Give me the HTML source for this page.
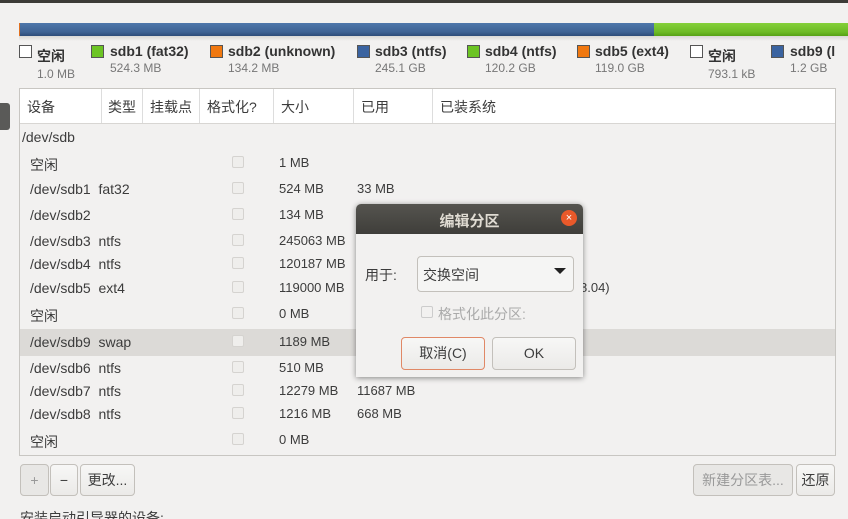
<!DOCTYPE html><html><head><meta charset="utf-8"><style>
html,body{margin:0;width:848px;height:519px;overflow:hidden}
body{background:#f2f1f0;font-family:"Liberation Sans","Noto Sans CJK SC",sans-serif;font-size:14px;color:#3c3c3c;position:relative}
.a{position:absolute;white-space:nowrap}
.sw{position:absolute;width:11px;height:11px;border:1px solid #555;top:45px}
.lb{font-size:14px;color:#333;top:43px;font-weight:bold}
.sz{font-size:12px;color:#777}
.cb{position:absolute;width:10px;height:10px;border:1px solid #d5d3d0;border-radius:2px;background:#efeeec;left:232px}
.btn{position:absolute;border:1px solid #c3c0bb;border-radius:4px;background:linear-gradient(#f7f7f6,#ebeae8);text-align:center;font-size:14px}
</style></head><body>
<div class="a" style="left:0;top:0;width:848px;height:3px;background:#3c3b37"></div>
<div class="a" style="left:19px;top:23px;width:635px;height:13px;background:linear-gradient(#4f77ab,#3e6293 70%,#2d4c78)"></div>
<div class="a" style="left:19px;top:23px;width:1px;height:13px;background:#e07020"></div>
<div class="a" style="left:654px;top:23px;width:194px;height:13px;background:linear-gradient(#85d03a,#6cba24 70%,#56a015)"></div>
<div class="a" style="left:19px;top:36px;width:829px;height:5px;background:linear-gradient(#d8d7d5,#f2f1f0)"></div>
<div class="sw" style="left:19px;background:#fff"></div><div class="a lb" style="left:37px;top:46px">空闲</div><div class="a sz" style="left:37px;top:67px">1.0 MB</div>
<div class="sw" style="left:91px;background:#6cc424"></div><div class="a lb" style="left:110px">sdb1 (fat32)</div><div class="a sz" style="left:110px;top:61px">524.3 MB</div>
<div class="sw" style="left:210px;background:#f07810"></div><div class="a lb" style="left:228px">sdb2 (unknown)</div><div class="a sz" style="left:228px;top:61px">134.2 MB</div>
<div class="sw" style="left:357px;background:#3a63a0"></div><div class="a lb" style="left:375px">sdb3 (ntfs)</div><div class="a sz" style="left:375px;top:61px">245.1 GB</div>
<div class="sw" style="left:467px;background:#6cc424"></div><div class="a lb" style="left:485px">sdb4 (ntfs)</div><div class="a sz" style="left:485px;top:61px">120.2 GB</div>
<div class="sw" style="left:577px;background:#f07810"></div><div class="a lb" style="left:595px">sdb5 (ext4)</div><div class="a sz" style="left:595px;top:61px">119.0 GB</div>
<div class="sw" style="left:690px;background:#fff"></div><div class="a lb" style="left:708px;top:46px">空闲</div><div class="a sz" style="left:708px;top:67px">793.1 kB</div>
<div class="sw" style="left:771px;background:#3a63a0"></div><div class="a lb" style="left:790px">sdb9 (l</div><div class="a sz" style="left:790px;top:61px">1.2 GB</div>
<div class="a" style="left:0;top:103px;width:10px;height:27px;background:#5a5a58;border-radius:0 3px 3px 0"></div>
<div class="a" style="left:19px;top:88px;width:815px;height:366px;border:1px solid #c8c6c2;background:#f2f1f0"></div>
<div class="a" style="left:20px;top:89px;width:815px;height:34px;background:#fff;border-bottom:1px solid #d8d6d3"></div>
<div class="a" style="left:101px;top:89px;width:1px;height:34px;background:#ddd"></div>
<div class="a" style="left:142px;top:89px;width:1px;height:34px;background:#ddd"></div>
<div class="a" style="left:199px;top:89px;width:1px;height:34px;background:#ddd"></div>
<div class="a" style="left:273px;top:89px;width:1px;height:34px;background:#ddd"></div>
<div class="a" style="left:353px;top:89px;width:1px;height:34px;background:#ddd"></div>
<div class="a" style="left:432px;top:89px;width:1px;height:34px;background:#ddd"></div>
<div class="a" style="left:27px;top:97px">设备</div><div class="a" style="left:108px;top:97px">类型</div><div class="a" style="left:150px;top:97px">挂载点</div><div class="a" style="left:207px;top:97px">格式化?</div><div class="a" style="left:281px;top:97px">大小</div><div class="a" style="left:361px;top:97px">已用</div><div class="a" style="left:440px;top:97px">已装系统</div>
<div class="a" style="left:20px;top:329px;width:815px;height:27px;background:#dcdad7"></div>
<div class="a" style="left:22px;top:129px">/dev/sdb</div>
<div class="a" style="left:30px;top:155px">空闲</div><div class="cb" style="top:156px"></div><div class="a" style="left:279px;top:155px;font-size:13px">1 MB</div>
<div class="a" style="left:30px;top:181px">/dev/sdb1&nbsp; fat32</div><div class="cb" style="top:182px"></div><div class="a" style="left:279px;top:181px;font-size:13px">524 MB</div><div class="a" style="left:357px;top:181px;font-size:13px">33 MB</div>
<div class="a" style="left:30px;top:207px">/dev/sdb2</div><div class="cb" style="top:208px"></div><div class="a" style="left:279px;top:207px;font-size:13px">134 MB</div>
<div class="a" style="left:30px;top:233px">/dev/sdb3&nbsp; ntfs</div><div class="cb" style="top:234px"></div><div class="a" style="left:279px;top:233px;font-size:13px">245063 MB</div>
<div class="a" style="left:30px;top:256px">/dev/sdb4&nbsp; ntfs</div><div class="cb" style="top:257px"></div><div class="a" style="left:279px;top:256px;font-size:13px">120187 MB</div>
<div class="a" style="left:30px;top:280px">/dev/sdb5&nbsp; ext4</div><div class="cb" style="top:281px"></div><div class="a" style="left:279px;top:280px;font-size:13px">119000 MB</div><div class="a" style="left:580px;top:280px;font-size:13px">8.04)</div>
<div class="a" style="left:30px;top:306px">空闲</div><div class="cb" style="top:307px"></div><div class="a" style="left:279px;top:306px;font-size:13px">0 MB</div>
<div class="a" style="left:30px;top:334px">/dev/sdb9&nbsp; swap</div><div class="cb" style="top:335px"></div><div class="a" style="left:279px;top:334px;font-size:13px">1189 MB</div>
<div class="a" style="left:30px;top:360px">/dev/sdb6&nbsp; ntfs</div><div class="cb" style="top:361px"></div><div class="a" style="left:279px;top:360px;font-size:13px">510 MB</div>
<div class="a" style="left:30px;top:383px">/dev/sdb7&nbsp; ntfs</div><div class="cb" style="top:384px"></div><div class="a" style="left:279px;top:383px;font-size:13px">12279 MB</div><div class="a" style="left:357px;top:383px;font-size:13px">11687 MB</div>
<div class="a" style="left:30px;top:406px">/dev/sdb8&nbsp; ntfs</div><div class="cb" style="top:407px"></div><div class="a" style="left:279px;top:406px;font-size:13px">1216 MB</div><div class="a" style="left:357px;top:406px;font-size:13px">668 MB</div>
<div class="a" style="left:30px;top:432px">空闲</div><div class="cb" style="top:433px"></div><div class="a" style="left:279px;top:432px;font-size:13px">0 MB</div>
<div class="btn" style="left:20px;top:464px;width:27px;height:30px;line-height:30px;color:#999;background:#e8e7e5">+</div>
<div class="btn" style="left:50px;top:464px;width:26px;height:30px;line-height:30px">−</div>
<div class="btn" style="left:80px;top:464px;width:53px;height:30px;line-height:30px">更改...</div>
<div class="btn" style="left:693px;top:464px;width:98px;height:30px;line-height:30px;color:#999;background:#e8e7e5">新建分区表...</div>
<div class="btn" style="left:796px;top:464px;width:37px;height:30px;line-height:30px">还原</div>
<div class="a" style="left:20px;top:508px">安装启动引导器的设备:</div>
<div class="a" style="left:356px;top:204px;width:227px;height:173px;background:#f2f1f0;box-shadow:0 1px 6px rgba(0,0,0,.45);border-radius:5px 5px 0 0"></div>
<div class="a" style="left:356px;top:204px;width:227px;height:30px;background:linear-gradient(#55544f,#3f3e3a);border-radius:5px 5px 0 0"></div>
<div class="a" style="left:356px;top:210px;width:227px;text-align:center;color:#dfdbd2;font-size:15px;font-weight:bold">编辑分区</div>
<div class="a" style="left:561px;top:210px;width:16px;height:16px;border-radius:50%;background:#e9592a;color:#fff;font-size:11px;line-height:16px;text-align:center">×</div>
<div class="a" style="left:365px;top:265px">用于:</div>
<div class="btn" style="left:417px;top:256px;width:155px;height:34px;background:#f5f5f4"></div>
<div class="a" style="left:423px;top:265px">交换空间</div>
<div class="a" style="left:554px;top:268px;width:0;height:0;border-left:6px solid transparent;border-right:6px solid transparent;border-top:6px solid #222"></div>
<div class="a" style="left:421px;top:306px;width:10px;height:10px;border:1px solid #ccc;border-radius:2px"></div>
<div class="a" style="left:438px;top:304px;color:#aaa">格式化此分区:</div>
<div class="btn" style="left:401px;top:337px;width:82px;height:31px;line-height:31px;border-color:#e08866">取消(C)</div>
<div class="btn" style="left:492px;top:337px;width:82px;height:31px;line-height:31px">OK</div>
</body></html>
